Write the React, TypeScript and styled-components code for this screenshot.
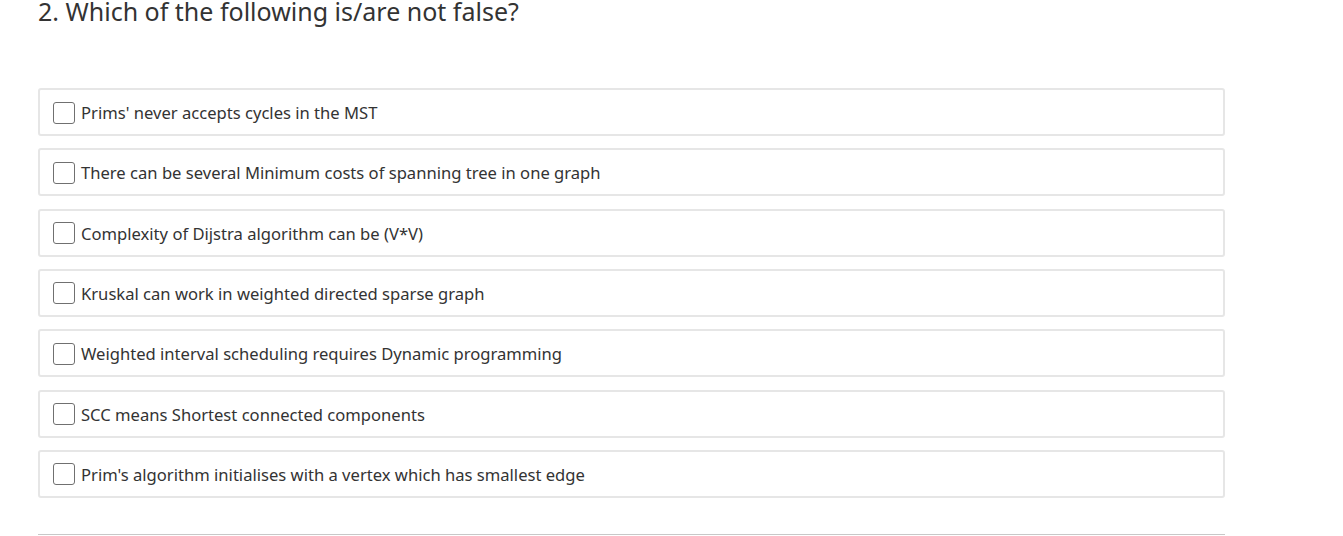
import React from "react";
import styled, { createGlobalStyle } from "styled-components";

const Global = createGlobalStyle`
  html, body { margin: 0; padding: 0; background: #fff; }
  body { font-family: "Noto Sans", "Open Sans", sans-serif; color: #333; }
`;

const Page = styled.div`
  padding: 0 118px 0 38px;
  overflow: hidden;
  height: 536px;
`;

const Title = styled.h2`
  margin: -4px 0 0 0;
  font-size: 25px;
  font-weight: 400;
  line-height: 1.2;
  color: #333;
  white-space: nowrap;
`;

const List = styled.div`
  display: flex;
  flex-direction: column;
  gap: 12.33px;
  margin-top: 62px;
`;

const Option = styled.label`
  display: flex;
  align-items: center;
  gap: 6px;
  height: 48px;
  box-sizing: border-box;
  border: 2px solid #e6e6e6;
  border-radius: 3px;
  padding: 1px 13px 0;
  font-size: 16.6px;
  color: #333;
`;

const Box = styled.span`
  width: 22px;
  height: 22px;
  box-sizing: border-box;
  border: 1.5px solid #707070;
  border-radius: 3px;
  background: #fff;
  flex: none;
`;

const Rule = styled.div`
  margin-top: 36px;
  height: 1px;
  background: #c8c8c8;
`;

const options = [
  "Prims' never accepts cycles in the MST",
  "There can be several Minimum costs of spanning tree in one graph",
  "Complexity of Dijstra algorithm can be (V*V)",
  "Kruskal can work in weighted directed sparse graph",
  "Weighted interval scheduling requires Dynamic programming",
  "SCC means Shortest connected components",
  "Prim's algorithm initialises with a vertex which has smallest edge",
];

export default function App() {
  return (
    <Page>
      <Global />
      <Title>2. Which of the following is/are not false?</Title>
      <List>
        {options.map((o) => (
          <Option key={o}>
            <Box />
            {o}
          </Option>
        ))}
      </List>
      <Rule />
    </Page>
  );
}
